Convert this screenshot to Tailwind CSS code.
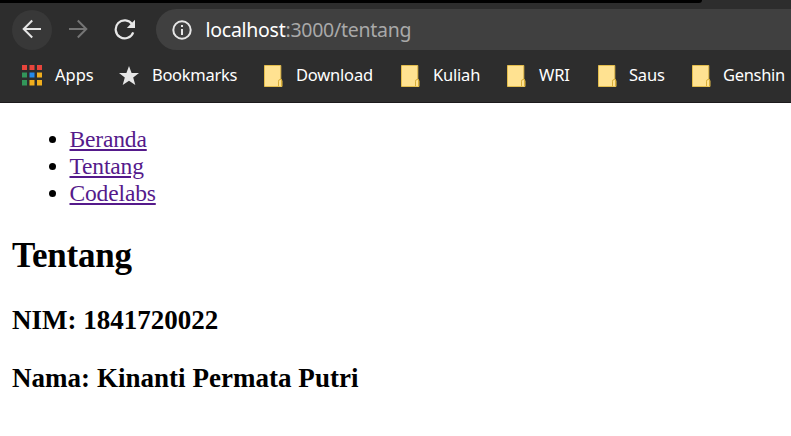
<!DOCTYPE html>
<html lang="id">
<head>
<meta charset="utf-8">
<title>Tentang</title>
<script src="https://cdn.jsdelivr.net/npm/@tailwindcss/browser@4"></script>
</head>
<body class="h-[436px] w-[791px] overflow-hidden bg-white">
<svg class="hidden">
  <symbol id="folder" viewBox="0 0 19 22">
    <path d="M.5.5H16.8V14.5L18 15.5V21.5H.5Z" fill="#ffe291" stroke="#e3bd4c"/>
    <path d="M14.5 21V16.2Q14.5 14.5 16.2 14.5H17.5V21.5" fill="#ffe291" stroke="#d8ae39"/>
  </symbol>
</svg>
<header class="flex h-[103px] flex-col border-b border-[#1c1a1c] bg-[#2d2d2d] font-['Noto_Sans',sans-serif] text-white">
  <div class="h-[3px] w-[702px] rounded-br-[5px] bg-black"></div>
  <div class="mt-[6px] flex h-[41px] items-center pl-3">
    <button class="flex size-10 shrink-0 items-center justify-center rounded-full bg-[#383838]" aria-label="Kembali">
      <svg class="-mt-px size-5" viewBox="0 0 20 20" fill="none" stroke="#e6e6e6" stroke-width="2"><path d="M19 10H2M10.2 1.5 1.7 10 10.2 18.5"/></svg>
    </button>
    <svg class="-mt-px ml-4 size-5 shrink-0" viewBox="0 0 20 20" fill="none" stroke="#757575" stroke-width="2"><path d="M1 10H18M9.8 1.5 18.3 10 9.8 18.5"/></svg>
    <svg class="ml-[26px] size-[22px] shrink-0" viewBox="0 0 22 22"><path d="M18.2 5.4A9 9 0 1 0 19.2 13.3" fill="none" stroke="#e6e6e6" stroke-width="2.2"/><path d="M21 .8V9H12.8Z" fill="#e6e6e6"/></svg>
    <div class="ml-5 flex h-[41px] flex-1 items-center rounded-l-full bg-[#404040] pl-4">
      <svg class="size-5 shrink-0" viewBox="0 0 20 20"><circle cx="10" cy="10" r="8.7" fill="none" stroke="#e6e6e6" stroke-width="2"/><path d="M9 9h2v6H9ZM9 5h2v2H9Z" fill="#e6e6e6"/></svg>
      <span class="ml-[13.5px] text-[19.5px] leading-7 tracking-[-0.27px] whitespace-nowrap text-[#a9a9a9]"><span class="text-white">localhost</span>:3000/tentang</span>
    </div>
  </div>
  <nav class="flex h-[51px] items-center pl-[22px] text-[16.5px] leading-6 tracking-[-0.2px] whitespace-nowrap">
    <div class="flex w-[97px] shrink-0 items-center">
      <svg class="w-[33px] shrink-0" height="21" viewBox="0 0 33 21"><path d="M0 0h5v5H0ZM7.5 0h5v5h-5ZM15 0h5v5h-5Z" fill="#e8453c"/><path d="M0 7.5h5v5H0ZM0 15h5v5.5H0Z" fill="#32965a"/><path d="M7.5 7.5h5v5h-5Z" fill="#2589ea"/><path d="M15 7.5h5v5h-5ZM7.5 15h5v5.5h-5ZM15 15h5v5.5h-5Z" fill="#f0ae1d"/></svg>
      <span class="-mt-0.5 tracking-normal">Apps</span>
    </div>
    <div class="flex w-[145px] shrink-0 items-center">
      <svg class="h-5 w-[33px] shrink-0" viewBox="0 0 33 20"><path d="M10 0 12.6 7H20L14.2 11.6 16.3 19 10 14.8 3.7 19 5.8 11.6 0 7H7.4Z" fill="#e6e6e6"/></svg>
      <span class="-mt-0.5 tracking-[-0.3px]">Bookmarks</span>
    </div>
    <div class="flex w-[137px] shrink-0 items-center gap-[13px]"><svg class="h-[22px] w-[19px]"><use href="#folder"/></svg><span class="-mt-0.5">Download</span></div>
    <div class="flex w-[106px] shrink-0 items-center gap-[13px]"><svg class="h-[22px] w-[19px]"><use href="#folder"/></svg><span class="-mt-0.5">Kuliah</span></div>
    <div class="flex w-[91px] shrink-0 items-center gap-[13px]"><svg class="h-[22px] w-[19px]"><use href="#folder"/></svg><span class="-mt-0.5">WRI</span></div>
    <div class="flex w-[94px] shrink-0 items-center gap-3"><svg class="h-[22px] w-[19px]"><use href="#folder"/></svg><span class="-mt-0.5">Saus</span></div>
    <div class="flex shrink-0 items-center gap-3"><svg class="h-[22px] w-[19px]"><use href="#folder"/></svg><span class="-mt-0.5 tracking-[-0.3px]">Genshin</span></div>
  </nav>
</header>
<main class="px-3 pt-[23px] font-['Liberation_Serif',serif] text-black">
  <ul class="list-disc pl-[57.5px] text-[23.5px] leading-[27px]">
    <li><a class="tracking-[-0.15px] text-[#551a8b] underline decoration-2 underline-offset-2" href="#">Beranda</a></li>
    <li><a class="tracking-[-0.15px] text-[#551a8b] underline decoration-2 underline-offset-2" href="#">Tentang</a></li>
    <li><a class="tracking-[-0.15px] text-[#551a8b] underline decoration-2 underline-offset-2" href="#">Codelabs</a></li>
  </ul>
  <h2 class="mt-7 text-[35px] leading-[41px] font-bold tracking-[-0.2px]">Tentang</h2>
  <h3 class="mt-[29px] text-[27px] leading-[31px] font-bold">NIM: 1841720022</h3>
  <h3 class="mt-[27px] text-[27px] leading-[31px] font-bold tracking-[0.03px]">Nama: Kinanti Permata Putri</h3>
</main>
</body>
</html>
